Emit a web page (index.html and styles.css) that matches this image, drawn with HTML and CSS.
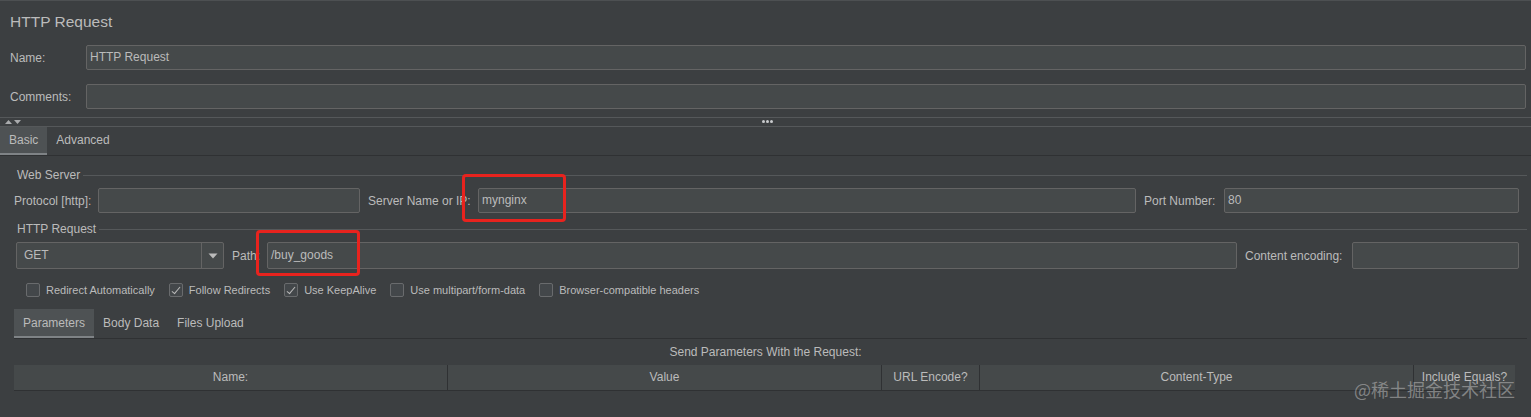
FILE: index.html
```html
<!DOCTYPE html>
<html lang="en">
<head>
    <meta charset="UTF-8">
    <meta name="viewport" content="width=device-width, initial-scale=1.0">
    <title>HTTP Request</title>
    <link rel="stylesheet" href="styles.css">
</head>
<body>
    <!-- Title -->
    <div class="title">HTTP Request</div>

    <!-- Name / comments -->
    <div class="top-form">
        <div class="row name-row">
            <label class="top-label">Name:</label>
            <div class="field grow">HTTP Request</div>
        </div>
        <div class="row comments-row">
            <label class="top-label">Comments:</label>
            <div class="field grow"></div>
        </div>
    </div>

    <!-- Splitter -->
    <div class="splitter">
        <svg class="arrows" width="20" height="6" viewBox="0 0 20 6">
            <path d="M2 5 L5.5 1 L9 5 Z" fill="#a9abad"/>
            <path d="M11 1 L18 1 L14.5 5 Z" fill="#a9abad"/>
        </svg>
        <div class="dots"><span></span><span></span><span></span></div>
    </div>

    <!-- Main tabs -->
    <div class="tabs main-tabs">
        <div class="tab active">Basic</div>
        <div class="tab">Advanced</div>
    </div>

    <div class="panel">
        <!-- Web Server -->
        <div class="group-title"><span>Web Server</span><i></i></div>
        <div class="row server-row">
            <label class="lbl lbl-protocol">Protocol [http]:</label>
            <div class="field w-protocol"></div>
            <label class="lbl lbl-server">Server Name or IP:</label>
            <div class="field w-server">mynginx
                <div class="mark mark-server"></div>
            </div>
            <label class="lbl lbl-port">Port Number:</label>
            <div class="field w-port">80</div>
        </div>

        <!-- HTTP Request -->
        <div class="group-title request-title"><span>HTTP Request</span><i></i></div>
        <div class="row request-row">
            <div class="combo">
                <span class="combo-value">GET</span>
                <span class="combo-btn">
                    <svg width="10" height="6" viewBox="0 0 10 6"><path d="M0.5 0.5 L9.5 0.5 L5 5.5 Z" fill="#bbbbbb"/></svg>
                </span>
            </div>
            <label class="lbl lbl-path">Path:</label>
            <div class="field w-path">/buy_goods
                <div class="mark mark-path"></div>
            </div>
            <label class="lbl lbl-enc">Content encoding:</label>
            <div class="field w-enc"></div>
        </div>

        <!-- Options -->
        <div class="checks">
            <div class="check"><span class="box"></span>Redirect Automatically</div>
            <div class="check"><span class="box checked"></span>Follow Redirects</div>
            <div class="check"><span class="box checked"></span>Use KeepAlive</div>
            <div class="check"><span class="box"></span>Use multipart/form-data</div>
            <div class="check"><span class="box"></span>Browser-compatible headers</div>
        </div>

        <!-- Parameter tabs -->
        <div class="tabs sub-tabs">
            <div class="tab active">Parameters</div>
            <div class="tab">Body Data</div>
            <div class="tab">Files Upload</div>
        </div>

        <div class="caption">Send Parameters With the Request:</div>

        <div class="table-head">
            <div class="col c-name">Name:</div>
            <div class="col c-value">Value</div>
            <div class="col c-url">URL Encode?</div>
            <div class="col c-type">Content-Type</div>
            <div class="col c-eq">Include Equals?</div>
        </div>
    </div>

    <div class="watermark">@稀土掘金技术社区</div>
</body>
</html>
```

FILE: styles.css
```css
/* Page */
body {
    margin: 0;
    height: 417px;
    overflow: hidden;
    background-color: #3c3f41;
    border-top: 1px solid #4d5052;
    box-sizing: border-box;
    font-family: "Liberation Sans", Arial, sans-serif;
    font-size: 12px;
    color: #bbbbbb;
    position: relative;
}

.title {
    height: 44px;
    line-height: 42px;
    padding-left: 10px;
    font-size: 15.5px;
}

.row {
    display: flex;
    align-items: center;
}

/* Name / comments */
.top-form {
    padding: 0 5px 0 10px;
}

.top-form .row {
    height: 25px;
}

.comments-row {
    margin-top: 14px;
}

.top-label {
    width: 76px;
}

.field {
    box-sizing: border-box;
    height: 25px;
    line-height: 23px;
    padding: 0 3px;
    background-color: #45494a;
    border: 1px solid #646464;
    border-radius: 2px;
    position: relative;
}

.grow {
    flex: 1;
}

/* Splitter */
.splitter {
    margin-top: 8px;
    height: 8px;
    border-top: 1px solid #55585a;
    border-bottom: 1px solid #55585a;
    position: relative;
}

.splitter .arrows {
    position: absolute;
    left: 3px;
    top: 1px;
}

.dots {
    position: absolute;
    left: 762px;
    top: 2px;
    display: flex;
    gap: 1px;
}

.dots span {
    width: 3px;
    height: 3px;
    border-radius: 50%;
    background-color: #c9cbcd;
}

/* Tabs */
.tabs {
    display: flex;
}

.tab {
    box-sizing: border-box;
    padding: 0 9px;
    border-bottom: 2px solid transparent;
}

.tab.active {
    background-color: #4e5254;
    border-bottom-color: #7f8386;
}

.main-tabs {
    height: 28px;
    border-bottom: 1px solid #2f3133;
}

.main-tabs .tab {
    line-height: 27px;
}

/* Basic panel */
.panel {
    padding: 0 4px 0 14px;
}

.group-title {
    display: flex;
    align-items: center;
    height: 14px;
    margin-top: 12px;
    padding-left: 3px;
}

.group-title i {
    flex: 1;
    height: 1px;
    margin-left: 3px;
    background-color: #55585a;
}

.request-title {
    margin-top: 9px;
}

.server-row {
    margin-top: 6px;
    height: 25px;
}

.request-row {
    margin-top: 6px;
    height: 27px;
}

.request-row .field {
    height: 27px;
    line-height: 25px;
}

.lbl {
    white-space: nowrap;
}

.lbl-protocol { width: 84px; }
.lbl-server { width: 110px; margin-left: 8px; }
.lbl-port { width: 80px; margin-left: 8px; }
.lbl-path { width: 35px; margin-left: 8px; }
.lbl-enc { width: 107px; margin-left: 8px; }

.w-protocol { width: 262px; }
.w-server { width: 658px; }
.w-port { width: 295px; }
.w-path { width: 970px; }
.w-enc { width: 167px; }

.combo {
    box-sizing: border-box;
    width: 208px;
    height: 27px;
    margin-left: 2px;
    display: flex;
    background-color: #45494a;
    border: 1px solid #646464;
    border-radius: 2px;
}

.combo-value {
    flex: 1;
    line-height: 25px;
    padding-left: 7px;
}

.combo-btn {
    width: 21px;
    border-left: 1px solid #646464;
    display: flex;
    align-items: center;
    justify-content: center;
}

/* Red highlight boxes */
.mark {
    position: absolute;
    border: 3px solid #e8231e;
    border-radius: 4px;
    box-sizing: border-box;
}

.mark-server {
    left: -17px;
    top: -15px;
    width: 104px;
    height: 48px;
}

.mark-path {
    left: -12px;
    top: -13px;
    width: 104px;
    height: 46px;
}

/* Checkboxes */
.checks {
    display: flex;
    align-items: center;
    gap: 14px;
    height: 14px;
    margin-top: 14px;
    padding-left: 12px;
    font-size: 11px;
}

.check {
    display: flex;
    align-items: center;
    white-space: nowrap;
}

.box {
    box-sizing: border-box;
    width: 14px;
    height: 14px;
    margin-right: 6px;
    border: 1px solid #696b6d;
    border-radius: 2px;
    background-color: #43474a;
    position: relative;
}

.box.checked::after {
    content: "";
    position: absolute;
    left: 4px;
    top: 1px;
    width: 3px;
    height: 8px;
    border: solid #bbbbbb;
    border-width: 0 1.5px 1.5px 0;
    transform: rotate(40deg);
}

/* Parameter tabs */
.sub-tabs {
    margin-top: 12px;
    height: 29px;
    border-bottom: 1px solid #2f3133;
}

.sub-tabs .tab {
    line-height: 28px;
}

.caption {
    height: 26px;
    line-height: 26px;
    text-align: center;
    padding-right: 10px;
}

/* Table header */
.table-head {
    display: flex;
    width: 1501px;
    height: 26px;
    background-color: #45494a;
    border-bottom: 1px solid #2f3133;
    box-sizing: border-box;
}

.col {
    line-height: 25px;
    text-align: center;
    white-space: nowrap;
    overflow: hidden;
    border-right: 1px solid #2f3133;
    box-sizing: border-box;
}

.c-name { width: 434px; }
.c-value { width: 434px; }
.c-url { width: 98px; }
.c-type { width: 434px; }
.c-eq { width: 101px; border-right: none; }

.watermark {
    position: absolute;
    left: 1354px;
    top: 376px;
    font-family: "Noto Sans CJK SC", sans-serif;
    font-size: 18px;
    line-height: 24px;
    color: rgba(190, 190, 190, 0.55);
    white-space: nowrap;
}
```
